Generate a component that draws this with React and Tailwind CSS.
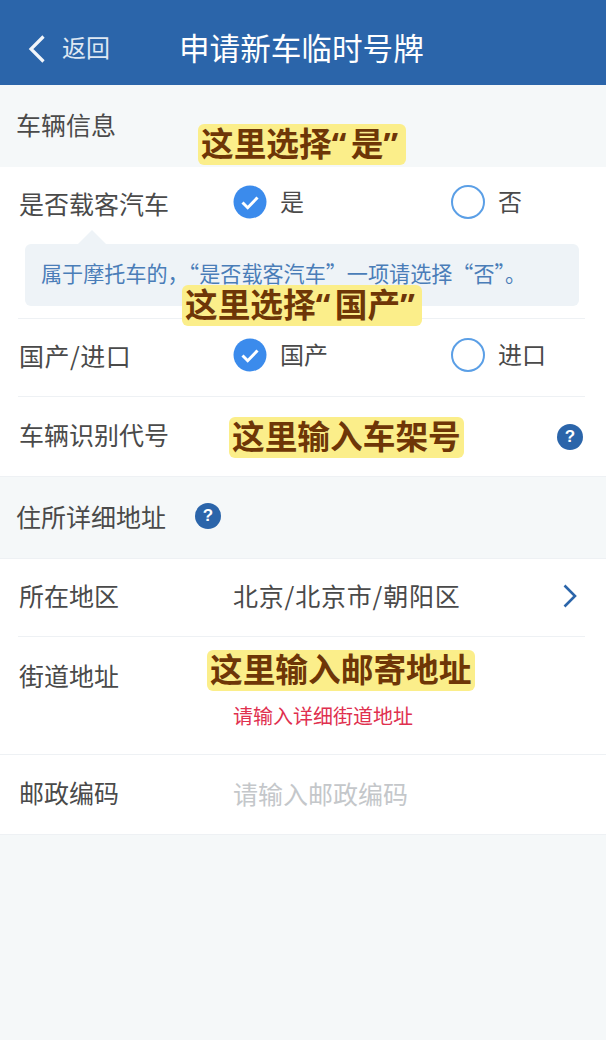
const FONT = "font-['Noto_Sans_CJK_SC','Noto_Sans',sans-serif]"

const Radio = ({ checked, label, className = "" }) => (
  <div className={`flex items-center gap-[13px] ${className}`}>
    {checked ? (
      <svg width="34" height="34" viewBox="0 0 34 34" className="shrink-0">
        <circle cx="17" cy="17" r="16.5" fill="#3b8bec" />
        <path d="M9.5 17.5l5.2 5.2L24.5 12.5" fill="none" stroke="#fff" strokeWidth="3" />
      </svg>
    ) : (
      <div className="w-[34px] h-[34px] shrink-0 rounded-full border-2 border-[#5b9fe6] bg-white"></div>
    )}
    <span className="text-[24px] leading-[34px] text-[#4a4a4a] pb-[2px]">{label}</span>
  </div>
)

const Help = ({ className = "" }) => (
  <div className={`w-[26px] h-[26px] rounded-full bg-[#2b65aa] text-white text-[17px] font-bold leading-[26px] text-center font-['Liberation_Sans',sans-serif] ${className}`}>
    ?
  </div>
)

const Note = ({ children, className = "" }) => (
  <div className={`absolute h-[41px] px-[3px] rounded-[6px] bg-[#fbee8a] text-[#6e3607] text-[32.7px] leading-[35px] font-bold whitespace-nowrap ${className}`}>
    {children}
  </div>
)

// the quotes in the yellow notes are narrow latin ones
const Quote = ({ children }) => <span className="font-['Noto_Sans',sans-serif] tracking-[4.5px]">{children}</span>

const Label = ({ children }) => (
  <span className="w-[215px] shrink-0 text-[25px] leading-[36px] text-[#4a4a4a] pb-[5px]">{children}</span>
)

export default function App() {
  return (
    <div className={`relative w-[606px] h-[1040px] overflow-hidden bg-[#f5f8f9] ${FONT}`}>
      <header className="h-[85px] bg-[#2b65aa] flex items-center text-white pt-[9px]">
        <svg width="18" height="28" viewBox="0 0 18 28" className="ml-[28px] mt-[4px] shrink-0">
          <path d="M15.5 1.5L3 14l12.5 12.5" fill="none" stroke="#f1f5fa" strokeWidth="3.2" />
        </svg>
        <span className="ml-[16px] text-[24px] leading-[36px] text-[#dfe8f3]">返回</span>
        <h1 className="ml-[69px] text-[30.6px] leading-[40px] font-normal">申请新车临时号牌</h1>
      </header>

      <div className="h-[82px] pl-[16px] pt-[21px] text-[25px] leading-[36px] text-[#4a4a4a]">车辆信息</div>

      <section className="bg-white h-[310px] border-b border-[#eef1f4]">
        <div className="h-[77px] px-[19px] flex items-center">
          <Label>是否载客汽车</Label>
          <div className="flex -ml-px -mt-[8px]">
            <Radio checked label="是" className="w-[218px]" />
            <Radio label="否" />
          </div>
        </div>
        <div className="relative ml-[25px] mr-[27px] h-[62px] rounded-[6px] bg-[#eef3f7] pl-[16px] flex items-start pt-[18px]">
          <div className="absolute -top-[14px] left-[53px] w-0 h-0 border-x-[14px] border-x-transparent border-b-[14px] border-b-[#eef3f7]"></div>
          <span className="text-[21.1px] leading-[22px] text-[#4a7db8] whitespace-nowrap">属于摩托车的，“是否载客汽车”一项请选择“否”。</span>
        </div>
        <div className="ml-[18px] mr-[21px] mt-[12px] h-[79px] border-y border-[#eef1f4] flex items-center pl-px">
          <Label><span className="tracking-[0.5px]">国产/进口</span></Label>
          <div className="flex -ml-px -mt-[5px]">
            <Radio checked label="国产" className="w-[218px]" />
            <Radio label="进口" />
          </div>
        </div>
        <div className="h-[79px] pl-[19px] pr-[23px] flex items-center">
          <Label>车辆识别代号</Label>
          <Help className="ml-auto" />
        </div>
      </section>

      <div className="h-[81px] pl-[16px] flex items-center gap-[29px]">
        <span className="text-[25px] leading-[36px] text-[#4a4a4a] pb-[4px]">住所详细地址</span>
        <Help className="-mt-[4px]" />
      </div>

      <section className="bg-white h-[277px] border-y border-[#eef1f4]">
        <div className="ml-[18px] mr-[21px] pl-px h-[78px] border-b border-[#eef1f4] flex items-center">
          <Label>所在地区</Label>
          <span className="text-[25px] leading-[36px] text-[#4a4a4a] tracking-[0.8px] pb-[5px] -ml-px">北京/北京市/朝阳区</span>
          <svg width="16" height="24" viewBox="0 0 16 24" className="ml-auto mr-[7px] -mt-[3px] shrink-0">
            <path d="M2.5 1.5L13 12 2.5 22.5" fill="none" stroke="#2b65aa" strokeWidth="2.6" />
          </svg>
        </div>
        <div className="h-[118px] pl-[19px] pt-[20px] flex border-b border-[#eef1f4]">
          <Label>街道地址</Label>
          <span className="mt-[46px] -ml-px text-[20px] leading-[26px] text-[#e0304f]">请输入详细街道地址</span>
        </div>
        <div className="h-[79px] pl-[19px] flex items-center">
          <Label>邮政编码</Label>
          <span className="text-[25px] leading-[36px] text-[#c4c7ca] pb-[3px] -ml-px">请输入邮政编码</span>
        </div>
      </section>

      <Note className="left-[198px] top-[124px]">这里选择<Quote>“</Quote>是<Quote>”</Quote></Note>
      <Note className="left-[182px] top-[285px]">这里选择<Quote>“</Quote>国产<Quote>”</Quote></Note>
      <Note className="left-[229px] top-[417px]">这里输入车架号</Note>
      <Note className="left-[207px] top-[650px]">这里输入邮寄地址</Note>
    </div>
  )
}
